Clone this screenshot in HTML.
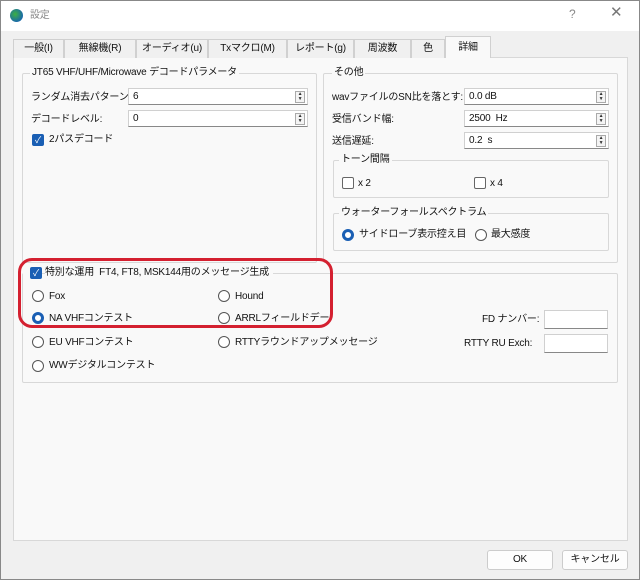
<!DOCTYPE html>
<html><head><meta charset="utf-8"><style>
*{box-sizing:border-box;margin:0;padding:0}
body{width:640px;height:580px;overflow:hidden;background:#fff;font-family:"Liberation Sans","Noto Sans CJK JP",sans-serif;font-size:10px;line-height:13px;letter-spacing:-0.2px;color:#111;position:relative}
.a{position:absolute;white-space:nowrap}
.win{position:absolute;left:0;top:0;width:640px;height:580px;background:#f0f0f0;border:1px solid #888;}
.title{position:absolute;left:0;top:0;width:638px;height:30px;background:#fff}
.pane{position:absolute;left:12px;top:56px;width:615px;height:484px;background:#f9f9f9;border:1px solid #d8d8d8}
.tab{position:absolute;top:38px;height:19px;border:1px solid #d0d0d0;border-bottom:none;background:#f0f0f0;text-align:center;line-height:18px}
.grp{position:absolute;border:1px solid #d8d8d8;border-radius:2px}
.lg{position:absolute;top:-8px;left:8px;background:#f9f9f9;padding:0 2px}
.inp{position:absolute;height:17px;background:#fff;border:1px solid #d0d0d0;border-bottom:1px solid #888;padding-left:4px;line-height:15px}
.spin{position:absolute;right:2px;top:2px;width:10px;height:12px;border:1px solid #aaa;background:#f4f4f4;font-size:5px;line-height:5px;text-align:center;color:#333}
.cb{position:absolute;width:12px;height:12px;border:1px solid #444;border-radius:2px;background:#fff}
.cbc{background:#1a5fb4;border-color:#1a5fb4;color:#fff;font-size:9px;line-height:10px;text-align:center}
.rb{position:absolute;width:12px;height:12px;border:1px solid #555;border-radius:50%;background:#fff}
.rbc{border:3.5px solid #1a5fb4}
.btn{position:absolute;top:549px;width:66px;height:20px;background:#fdfdfd;border:1px solid #ccc;border-radius:3px;text-align:center;line-height:18px}
</style></head><body>
<div class="win">
<div class="title"></div>
<div class="a" style="left:9px;top:8px;width:13px;height:13px;border-radius:50%;background:radial-gradient(circle at 40% 40%,#3cb043,#1a6aa8 70%)"></div>
<div class="a" style="left:29px;top:8px;color:#888">設定</div>
<div class="a" style="left:568px;top:7px;color:#888;font-size:12px">?</div>
<div class="a" style="left:609px;top:5px;color:#777;font-size:15px">✕</div>

<div class="pane"></div>
<div class="tab" style="left:12px;width:51px">一般(I)</div>
<div class="tab" style="left:63px;width:72px">無線機(R)</div>
<div class="tab" style="left:135px;width:72px">オーディオ(u)</div>
<div class="tab" style="left:207px;width:79px">Txマクロ(M)</div>
<div class="tab" style="left:286px;width:67px">レポート(g)</div>
<div class="tab" style="left:353px;width:57px">周波数</div>
<div class="tab" style="left:410px;width:34px">色</div>
<div class="tab" style="left:444px;width:46px;top:35px;height:22px;background:#f9f9f9;line-height:22px">詳細</div>

<div class="grp" style="left:21px;top:72px;width:295px;height:190px"><span class="lg" style="left:7px">JT65 VHF/UHF/Microwave デコードパラメータ</span></div>
<div class="a" style="left:30px;top:90px">ランダム消去パターン:</div>
<div class="inp" style="left:127px;top:87px;width:180px">6<div class="spin">▲<br>▼</div></div>
<div class="a" style="left:30px;top:112px">デコードレベル:</div>
<div class="inp" style="left:127px;top:109px;width:180px">0<div class="spin">▲<br>▼</div></div>
<div class="cb cbc" style="left:31px;top:133px">✓</div>
<div class="a" style="left:48px;top:132px">2パスデコード</div>

<div class="grp" style="left:322px;top:72px;width:295px;height:190px"><span class="lg">その他</span></div>
<div class="a" style="left:331px;top:90px">wavファイルのSN比を落とす:</div>
<div class="inp" style="left:463px;top:87px;width:145px">0.0 dB<div class="spin">▲<br>▼</div></div>
<div class="a" style="left:331px;top:112px">受信バンド幅:</div>
<div class="inp" style="left:463px;top:109px;width:145px">2500 &nbsp;Hz<div class="spin">▲<br>▼</div></div>
<div class="a" style="left:331px;top:134px">送信遅延:</div>
<div class="inp" style="left:463px;top:131px;width:145px">0.2 &nbsp;s<div class="spin">▲<br>▼</div></div>
<div class="grp" style="left:332px;top:159px;width:276px;height:38px"><span class="lg" style="left:5px">トーン間隔</span></div>
<div class="cb" style="left:341px;top:176px;border-color:#666"></div><div class="a" style="left:357px;top:176px">x 2</div>
<div class="cb" style="left:473px;top:176px;border-color:#666"></div><div class="a" style="left:489px;top:176px">x 4</div>
<div class="grp" style="left:332px;top:212px;width:276px;height:38px"><span class="lg" style="left:5px">ウォーターフォールスペクトラム</span></div>
<div class="rb rbc" style="left:341px;top:228px"></div><div class="a" style="left:358px;top:227px">サイドローブ表示控え目</div>
<div class="rb" style="left:474px;top:228px"></div><div class="a" style="left:490px;top:227px">最大感度</div>

<div class="grp" style="left:21px;top:272px;width:596px;height:110px"></div>
<div class="a" style="left:22px;top:265px;width:10px;height:12px;background:#f9f9f9"></div>
<div class="cb cbc" style="left:29px;top:266px">✓</div>
<div class="a" style="left:44px;top:265px;background:#f9f9f9;padding-right:4px">特別な運用 &nbsp;FT4, FT8, MSK144用のメッセージ生成</div>
<div class="rb" style="left:31px;top:289px"></div><div class="a" style="left:48px;top:289px">Fox</div>
<div class="rb" style="left:217px;top:289px"></div><div class="a" style="left:234px;top:289px">Hound</div>
<div class="rb rbc" style="left:31px;top:311px"></div><div class="a" style="left:48px;top:311px">NA VHFコンテスト</div>
<div class="rb" style="left:217px;top:311px"></div><div class="a" style="left:234px;top:311px">ARRLフィールドデー</div>
<div class="rb" style="left:31px;top:335px"></div><div class="a" style="left:48px;top:335px">EU VHFコンテスト</div>
<div class="rb" style="left:217px;top:335px"></div><div class="a" style="left:234px;top:335px">RTTYラウンドアップメッセージ</div>
<div class="rb" style="left:31px;top:359px"></div><div class="a" style="left:48px;top:358px">WWデジタルコンテスト</div>
<div class="a" style="left:481px;top:312px">FD ナンバー:</div>
<div class="inp" style="left:543px;top:309px;width:64px;height:19px"></div>
<div class="a" style="left:463px;top:336px">RTTY RU Exch:</div>
<div class="inp" style="left:543px;top:333px;width:64px;height:19px"></div>
<div class="a" style="left:17px;top:257px;width:315px;height:70px;border:3px solid #d42030;border-radius:14px"></div>

<div class="btn" style="left:486px">OK</div>
<div class="btn" style="left:561px">キャンセル</div>
</div>
</body></html>
